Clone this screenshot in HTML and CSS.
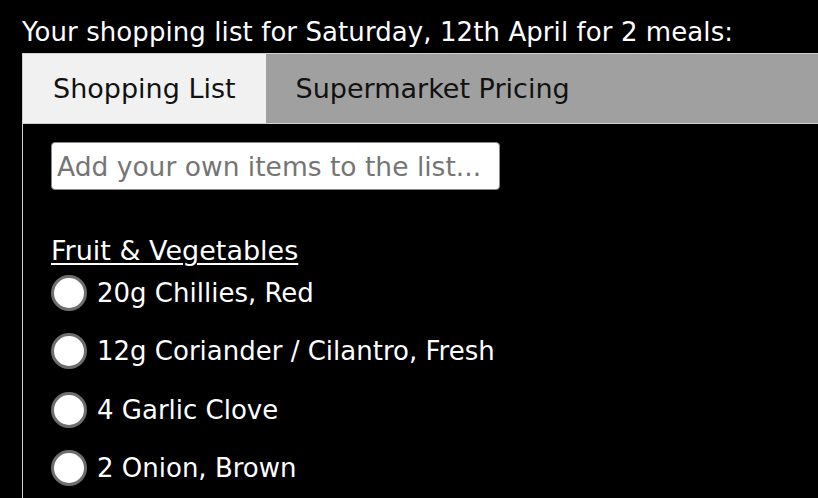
FILE: index.html
```html
<!DOCTYPE html>
<html lang="en">
<head>
<meta charset="utf-8">
<title>Shopping List</title>
<link rel="stylesheet" href="styles.css">
</head>
<body>
<div class="page">
  <p class="intro">Your shopping list for Saturday, 12th April for 2 meals:</p>
  <div class="panel">
    <div class="tabs">
      <button class="tab tab-active">Shopping List</button>
      <button class="tab">Supermarket Pricing</button>
    </div>
    <div class="tab-content">
      <input class="add-input" type="text" placeholder="Add your own items to the list...">
      <div class="category">
        <div class="category-title">Fruit &amp; Vegetables</div>
        <ul class="items">
          <li class="item"><span class="radio"></span><span class="item-label">20g Chillies, Red</span></li>
          <li class="item"><span class="radio"></span><span class="item-label">12g Coriander / Cilantro, Fresh</span></li>
          <li class="item"><span class="radio"></span><span class="item-label">4 Garlic Clove</span></li>
          <li class="item"><span class="radio"></span><span class="item-label">2 Onion, Brown</span></li>
        </ul>
      </div>
    </div>
  </div>
</div>
</body>
</html>
```
FILE: styles.css
```css
html, body {
  margin: 0;
  padding: 0;
  height: 100%;
  background: #000;
  overflow: hidden;
}

body {
  font-family: "DejaVu Sans", "Noto Sans", sans-serif;
  color: #fff;
  font-size: 26px;
  line-height: 32px;
}

.page {
  box-sizing: border-box;
  height: 100%;
  padding: 16px 0 0 22px;
  display: flex;
  flex-direction: column;
}

.intro {
  margin: 0 0 5px 0;
  white-space: nowrap;
  letter-spacing: 0.08px;
}

.panel {
  flex: 1;
  display: flex;
  flex-direction: column;
  min-height: 0;
}

.tabs {
  display: flex;
  border: 1px solid #d0d0d0;
  border-right: none;
  background: #a0a0a0;
}

.tab {
  font-family: inherit;
  font-size: 27px;
  line-height: 32px;
  height: 69px;
  padding: 0 30px;
  margin: 0;
  border: none;
  background: #a0a0a0;
  color: #111;
  white-space: nowrap;
}

.tab-active {
  background: #f1f1f1;
}

.tab-content {
  flex: 1;
  min-height: 0;
  overflow: hidden;
  border-left: 1px solid #d0d0d0;
  padding: 18px 0 0 28px;
}

.add-input {
  display: block;
  box-sizing: border-box;
  width: 449px;
  height: 48px;
  margin: 0;
  padding: 0 5px;
  border: 1px solid #8a8a8a;
  border-radius: 4px;
  background: #fff;
  font-family: inherit;
  font-size: 26.5px;
  color: #222;
}

.add-input::placeholder {
  color: #757575;
}

.category {
  margin-top: 45px;
}

.category-title {
  font-size: 27px;
  text-decoration: underline;
  text-underline-offset: 3px;
  text-decoration-thickness: 2px;
}

.items {
  list-style: none;
  margin: 8px 0 0 0;
  padding: 0;
  display: flex;
  flex-direction: column;
  gap: 23.5px;
}

.item {
  display: flex;
  align-items: center;
  gap: 10px;
  height: 35px;
}

.radio {
  box-sizing: border-box;
  width: 36px;
  height: 36px;
  border-radius: 50%;
  border: 3px solid #6e6e6e;
  background: #fff;
  flex: none;
}

.item-label {
  white-space: nowrap;
}
```
